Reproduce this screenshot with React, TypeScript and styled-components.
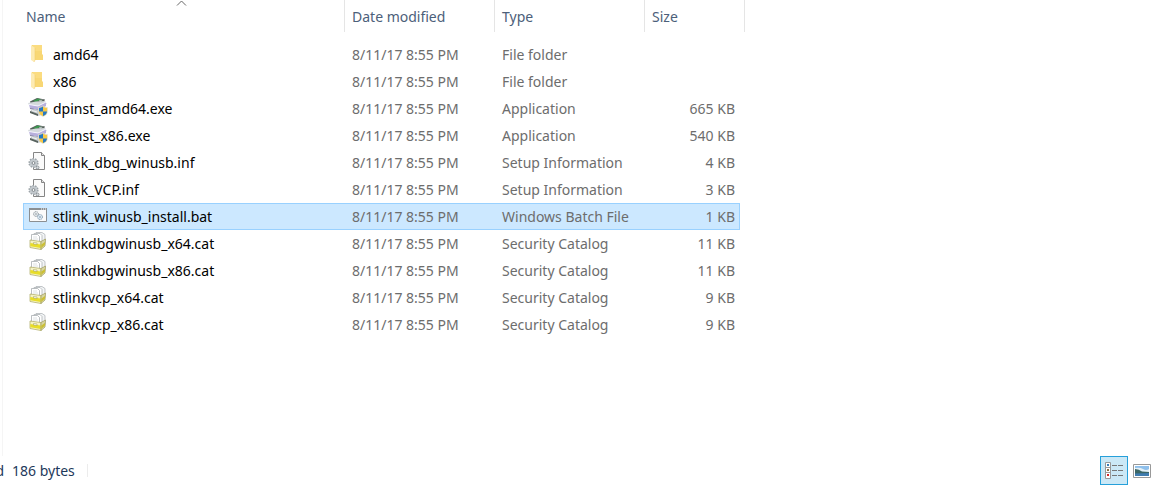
import React from "react";
import styled, { createGlobalStyle } from "styled-components";

const GlobalStyle = createGlobalStyle`
  * { box-sizing: border-box; }
  body {
    margin: 0;
    background: #fff;
    font-family: "Noto Sans", "Open Sans", sans-serif;
    font-size: 14px;
    line-height: 20px;
  }
`;

const Window = styled.div`
  display: flex;
  flex-direction: column;
  min-height: 100vh;
  overflow: hidden;
`;

const FilePane = styled.main`
  flex: 1;
  margin-left: 2px;
  padding-left: 20px;
  border-left: 1px solid #f5f5f5;
`;

const FileTable = styled.table`
  display: block;
  border-spacing: 0;
`;

const Head = styled.thead`
  display: block;
  padding-bottom: 9px;
`;

const HeadRow = styled.tr`
  display: grid;
  grid-template-columns: 322px 150px 150px 100px;
`;

const HeadCell = styled.th`
  position: relative;
  padding: 0;
  font-weight: 400;
  border-right: 1px solid #e5e5e5;
`;

const SortButton = styled.button<{ $first?: boolean }>`
  display: block;
  width: 100%;
  height: 32px;
  padding: 2px 0 0 ${(p) => (p.$first ? 3 : 7)}px;
  border: 0;
  background: none;
  color: #4c607a;
  font: inherit;
  text-align: left;
`;

const SortArrow = styled.svg`
  position: absolute;
  top: 0;
  left: 50%;
  margin-left: -8px;
`;

const Body = styled.tbody`
  display: block;
`;

const FileRow = styled.tr<{ $selected?: boolean }>`
  display: grid;
  grid-template-columns: 321px 150px 150px 94px;
  align-items: center;
  width: 717px;
  height: 27px;
  border: 1px solid ${(p) => (p.$selected ? "#99d1ff" : "transparent")};
  background: ${(p) => (p.$selected ? "#cce8ff" : "transparent")};
`;

const Cell = styled.td<{ $right?: boolean }>`
  padding: 0 4px 0 7px;
  color: #6d6d6d;
  text-align: ${(p) => (p.$right ? "right" : "left")};
  white-space: nowrap;
`;

const NameCell = styled.td`
  display: flex;
  align-items: center;
  gap: 5px;
  padding: 0 4px;
  color: #000;
  white-space: nowrap;
`;

const StatusBar = styled.footer`
  display: flex;
  align-items: center;
  height: 29px;
  padding-right: 9px;
  color: #1e395b;
`;

const SelectionText = styled.span`
  display: flex;
  justify-content: flex-end;
  width: 4px;
`;

const SizeText = styled.span`
  margin-left: 8px;
  padding-right: 12px;
`;

const Divider = styled.span`
  width: 1px;
  height: 13px;
  background: #ececec;
`;

const ViewButtons = styled.div`
  display: flex;
  gap: 4px;
  margin-left: auto;
`;

const ViewButton = styled.button<{ $active?: boolean }>`
  display: flex;
  align-items: center;
  justify-content: center;
  width: ${(p) => (p.$active ? 28 : 20)}px;
  height: 29px;
  padding: 0;
  border: ${(p) => (p.$active ? "1px solid #26a0da" : "0")};
  background: ${(p) => (p.$active ? "#cbe8f6" : "none")};
`;

type Kind = "folder" | "app" | "inf" | "bat" | "cat";

const drawings: Record<Kind, React.ReactNode> = {
  folder: (
    <>
      <path d="M4 2h10v9l1 1v5H5z" fill="#f8d775" />
      <path d="M5 2h9v6H5z" fill="#fbdc80" />
      <path d="M3 2l4 3v12l-1 2-3-2z" fill="#fdebb3" />
      <path d="M7 5v12l-1 2" fill="none" stroke="#f1cd6b" strokeWidth=".6" />
    </>
  ),
  app: (
    <>
      <path d="M2 4.500L9 1l8 1.500-2 4.500-12 1z" fill="#56605c" />
      <path d="M5 4l5-2.500 3 .7L8 5z" fill="#3c9a50" />
      <path d="M11 3l4-.5-3 3z" fill="#aebcb4" />
      <path d="M0 6l8-1.500L17 4l2 3-8 2-10-1z" fill="#d4d9dc" />
      <path d="M1 7.500L10 9l8-4v4l-7 4.500-9-2z" fill="#b7afdc" />
      <path d="M1 7.500L10 9l8-4" fill="none" stroke="#f6f5ff" />
      <path d="M2 11.500l9 2" stroke="#6c6e89" strokeWidth=".8" />
      <path d="M3 13l4-1 6 2v4l-3 1-8-3.500z" fill="#c7cccf" />
      <path d="M2 14l8 3v2l-8-3z" fill="#58635f" />
      <path d="M4 13.500l5 1.500" stroke="#f1f3f3" />
      <path d="M10.500 10.500q3 0 4.500-1.500 1.500 1.500 4.500 1.500v3.500q0 4-4.500 5.500-4.500-1.500-4.500-5.500z" fill="#f7c948" stroke="#dfe5e9" strokeWidth=".6" />
      <path d="M11 11q2.500-.2 4-1.500V14.500h-4z" fill="#2679c5" />
      <path d="M15 14.500h4q-.3 3-4 4.500z" fill="#2679c5" />
    </>
  ),
  inf: (
    <>
      <path d="M5.500 1.500h8l3 3v14h-11z" fill="#fafafa" stroke="#858585" />
      <path d="M13.500 1.500v3h3" fill="#e4e4e4" stroke="#858585" />
      <circle cx="5.500" cy="12" r="4.200" fill="#c5cbd0" stroke="#9da4a9" strokeWidth="1.800" strokeDasharray="1.600 1" />
      <circle cx="5.500" cy="12" r="3.600" fill="#c3c9ce" />
      <circle cx="5.500" cy="12" r="1.400" fill="#fff" stroke="#6c7479" strokeWidth=".8" />
      <circle cx="9.500" cy="16.500" r="1.500" fill="#d8dde0" stroke="#7f878c" strokeWidth=".8" />
    </>
  ),
  bat: (
    <>
      <path d="M1.500 3.500h17v13h-17z" fill="#fbfbfb" stroke="#8b8f92" />
      <path d="M1 3h18v2H1z" fill="#8b8f92" />
      <path d="M13 4h1m1 0h1m1 0h1" stroke="#fff" />
      <circle cx="8" cy="9" r="2.400" fill="#e7ebee" stroke="#8e979d" strokeDasharray="1.200 .6" />
      <circle cx="8" cy="9" r=".8" fill="#8e979d" />
      <circle cx="12" cy="12" r="2.500" fill="#dce8f2" stroke="#809bb0" strokeDasharray="1.200 .6" />
      <circle cx="12" cy="12" r=".8" fill="#748fa4" />
    </>
  ),
  cat: (
    <>
      <path d="M8 .5h6l3 2v9l-4 2H8z" fill="#f3f5f6" stroke="#a9aeb1" strokeWidth=".7" />
      <path d="M6 1.500h6l2 2V12H6z" fill="#fff" stroke="#a5abae" strokeWidth=".7" />
      <path d="M3.500 2.500h6l2 2V11h-8z" fill="#fff" stroke="#9da3a7" strokeWidth=".7" />
      <path d="M5 5h4M5 7h5" stroke="#d5dadd" strokeWidth=".8" />
      <path d="M2 8l11 1.500v8L2 15.500z" fill="#f5f3c4" stroke="#aaa65c" strokeWidth=".7" />
      <path d="M2.300 11l10.400 1.500v3.500L2.300 14.300z" fill="#e8dd28" />
      <path d="M13 9.500l4.500-2.500-.5 7-4 3.500z" fill="#d9d7a0" stroke="#9f9b5d" strokeWidth=".7" />
      <path d="M13.300 12.500l3.700-2.500v2.500l-3.700 3.500z" fill="#cbbf34" />
      <path d="M5.500 10.500l3.500.5v1.500l-3.500-.5z" fill="#fff" stroke="#99954f" strokeWidth=".5" />
    </>
  ),
};

const FileIcon = ({ kind }: { kind: Kind }) => (
  <svg width="20" height="23" viewBox="0 0 20 23" aria-hidden="true">
    {drawings[kind]}
  </svg>
);

const modified = "8/11/17 8:55 PM";

const files: { name: string; kind: Kind; type: string; size?: string; selected?: boolean }[] = [
  { name: "amd64", kind: "folder", type: "File folder" },
  { name: "x86", kind: "folder", type: "File folder" },
  { name: "dpinst_amd64.exe", kind: "app", type: "Application", size: "665 KB" },
  { name: "dpinst_x86.exe", kind: "app", type: "Application", size: "540 KB" },
  { name: "stlink_dbg_winusb.inf", kind: "inf", type: "Setup Information", size: "4 KB" },
  { name: "stlink_VCP.inf", kind: "inf", type: "Setup Information", size: "3 KB" },
  { name: "stlink_winusb_install.bat", kind: "bat", type: "Windows Batch File", size: "1 KB", selected: true },
  { name: "stlinkdbgwinusb_x64.cat", kind: "cat", type: "Security Catalog", size: "11 KB" },
  { name: "stlinkdbgwinusb_x86.cat", kind: "cat", type: "Security Catalog", size: "11 KB" },
  { name: "stlinkvcp_x64.cat", kind: "cat", type: "Security Catalog", size: "9 KB" },
  { name: "stlinkvcp_x86.cat", kind: "cat", type: "Security Catalog", size: "9 KB" },
];

export default function App() {
  return (
    <Window>
      <GlobalStyle />
      <FilePane>
        <FileTable>
          <Head>
            <HeadRow>
              {["Name", "Date modified", "Type", "Size"].map((label, i) => (
                <HeadCell key={label} scope="col">
                  <SortButton type="button" $first={i === 0}>{label}</SortButton>
                  {i === 0 && (
                    <SortArrow width="11" height="7" viewBox="0 0 11 7" aria-hidden="true">
                      <path d="M1 5.500L5.500 1 10 5.500" fill="none" stroke="#686868" />
                    </SortArrow>
                  )}
                </HeadCell>
              ))}
            </HeadRow>
          </Head>
          <Body>
            {files.map((file) => (
              <FileRow key={file.name} $selected={file.selected}>
                <NameCell>
                  <FileIcon kind={file.kind} />
                  {file.name}
                </NameCell>
                <Cell>{modified}</Cell>
                <Cell>{file.type}</Cell>
                <Cell $right>{file.size}</Cell>
              </FileRow>
            ))}
          </Body>
        </FileTable>
      </FilePane>
      <StatusBar>
        <SelectionText>d</SelectionText>
        <SizeText>186 bytes</SizeText>
        <Divider />
        <ViewButtons>
          <ViewButton type="button" $active aria-label="Details view" aria-pressed="true">
            <svg width="18" height="17" viewBox="0 0 18 17" aria-hidden="true">
              <path d="M.5.500h5v16h-5zM.5 5.500h5m-5 5h5" fill="#fff" stroke="#999" />
              <path d="M2 2h2v2H2z" fill="#377fb8" />
              <path d="M2 7h2v2H2z" fill="#8f7044" />
              <path d="M2 12h2v2H2z" fill="#d62727" />
              <path d="M7 3.500h5m1 0h5M7 8.500h5m1 0h5M7 13.500h5m1 0h5" stroke="#777" />
            </svg>
          </ViewButton>
          <ViewButton type="button" aria-label="Large icons view" aria-pressed="false">
            <svg width="18" height="14" viewBox="0 0 18 14" aria-hidden="true">
              <path d="M.5.500h17v13H.5z" fill="#fff" stroke="#999" />
              <path d="M2 2h14v10H2z" fill="#8fc0ec" />
              <path d="M2 4q5-1 8 1t6 0v3H2z" fill="#e3f0f7" />
              <path d="M2 5q4 0 7 2.500l7 .5v2H2z" fill="#3b6665" />
              <path d="M2 9.500l14-.5v3H2z" fill="#3f7cb0" />
            </svg>
          </ViewButton>
        </ViewButtons>
      </StatusBar>
    </Window>
  );
}
